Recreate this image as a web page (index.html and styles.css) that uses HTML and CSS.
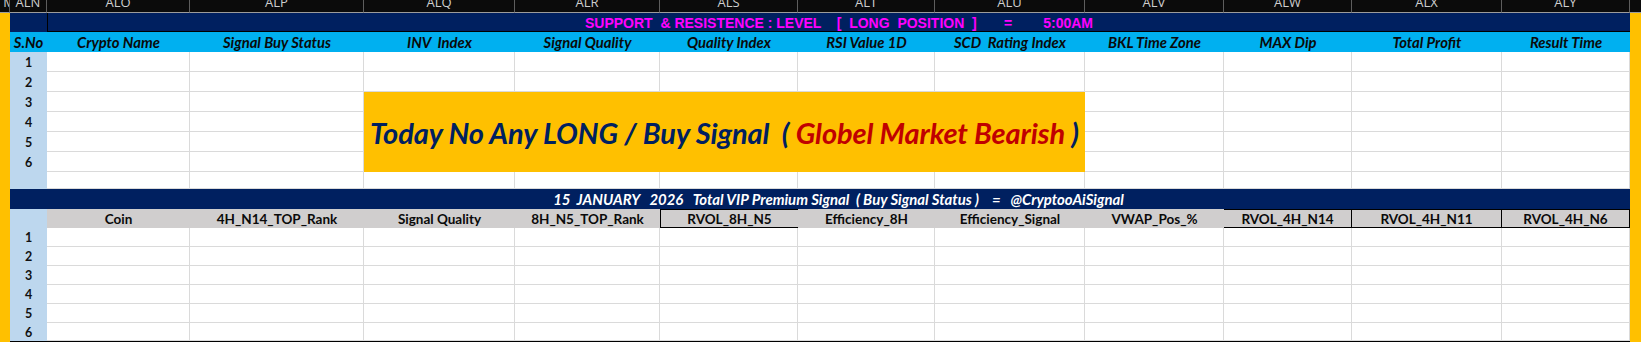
FILE: index.html
```html
<!DOCTYPE html>
<html>
<head>
<meta charset="utf-8">
<link rel="stylesheet" href="styles.css">
</head>
<body>
<div class="sheet">
  <!-- column header row -->
  <div class="h hm">M</div>
  <div class="h">ALN</div>
  <div class="h">ALO</div>
  <div class="h">ALP</div>
  <div class="h">ALQ</div>
  <div class="h">ALR</div>
  <div class="h">ALS</div>
  <div class="h">ALT</div>
  <div class="h">ALU</div>
  <div class="h">ALV</div>
  <div class="h">ALW</div>
  <div class="h">ALX</div>
  <div class="h">ALY</div>
  <div class="h hlast"></div>

  <div class="side side-l"></div>
  <div class="side side-r"></div>

  <!-- title row -->
  <div class="navy"></div>
  <div class="title">SUPPORT  &amp; RESISTENCE : LEVEL    [  LONG  POSITION  ]       =        5:00AM</div>

  <!-- cyan header -->
  <div class="hc">S.No</div>
  <div class="hc">Crypto Name</div>
  <div class="hc">Signal Buy Status</div>
  <div class="hc">INV  Index</div>
  <div class="hc">Signal Quality</div>
  <div class="hc">Quality Index</div>
  <div class="hc">RSI Value 1D</div>
  <div class="hc">SCD  Rating Index</div>
  <div class="hc">BKL Time Zone</div>
  <div class="hc">MAX Dip</div>
  <div class="hc">Total Profit</div>
  <div class="hc">Result Time</div>

  <!-- yellow notice -->
  <div class="notice">Today No Any LONG / Buy Signal&nbsp;&nbsp;( <span class="red">Globel Market Bearish</span> )</div>

  <!-- top rows -->
  <div class="n">1</div>
  <div class="c"></div><div class="c"></div><div class="c"></div><div class="c"></div><div class="c"></div><div class="c"></div><div class="c"></div><div class="c"></div><div class="c"></div><div class="c"></div><div class="c"></div>
  <div class="n">2</div>
  <div class="c"></div><div class="c"></div><div class="c"></div><div class="c"></div><div class="c"></div><div class="c"></div><div class="c"></div><div class="c"></div><div class="c"></div><div class="c"></div><div class="c"></div>
  <div class="n">3</div>
  <div class="c"></div><div class="c"></div><div class="c"></div><div class="c"></div><div class="c"></div><div class="c"></div>
  <div class="n">4</div>
  <div class="c"></div><div class="c"></div><div class="c"></div><div class="c"></div><div class="c"></div><div class="c"></div>
  <div class="n">5</div>
  <div class="c"></div><div class="c"></div><div class="c"></div><div class="c"></div><div class="c"></div><div class="c"></div>
  <div class="n">6</div>
  <div class="c"></div><div class="c"></div><div class="c"></div><div class="c"></div><div class="c"></div><div class="c"></div>
  <div class="n"></div>
  <div class="c"></div><div class="c"></div><div class="c"></div><div class="c"></div><div class="c"></div><div class="c"></div><div class="c"></div><div class="c"></div><div class="c"></div><div class="c"></div><div class="c"></div>

  <!-- second title -->
  <div class="navy"></div>
  <div class="title2">15  JANUARY   2026   Total VIP Premium Signal  ( Buy Signal Status )    =   @CryptooAiSignal</div>

  <!-- grey header -->
  <div class="n"></div>
  <div class="g">Coin</div>
  <div class="g">4H_N14_TOP_Rank</div>
  <div class="g">Signal Quality</div>
  <div class="g">8H_N5_TOP_Rank</div>
  <div class="g box box-open">RVOL_8H_N5</div>
  <div class="g">Efficiency_8H</div>
  <div class="g">Efficiency_Signal</div>
  <div class="g">VWAP_Pos_%</div>
  <div class="g box">RVOL_4H_N14</div>
  <div class="g box">RVOL_4H_N11</div>
  <div class="g box">RVOL_4H_N6</div>

  <!-- bottom rows -->
  <div class="n">1</div>
  <div class="c"></div><div class="c"></div><div class="c"></div><div class="c"></div><div class="c"></div><div class="c"></div><div class="c"></div><div class="c"></div><div class="c"></div><div class="c"></div><div class="c"></div>
  <div class="n">2</div>
  <div class="c"></div><div class="c"></div><div class="c"></div><div class="c"></div><div class="c"></div><div class="c"></div><div class="c"></div><div class="c"></div><div class="c"></div><div class="c"></div><div class="c"></div>
  <div class="n">3</div>
  <div class="c"></div><div class="c"></div><div class="c"></div><div class="c"></div><div class="c"></div><div class="c"></div><div class="c"></div><div class="c"></div><div class="c"></div><div class="c"></div><div class="c"></div>
  <div class="n">4</div>
  <div class="c"></div><div class="c"></div><div class="c"></div><div class="c"></div><div class="c"></div><div class="c"></div><div class="c"></div><div class="c"></div><div class="c"></div><div class="c"></div><div class="c"></div>
  <div class="n">5</div>
  <div class="c"></div><div class="c"></div><div class="c"></div><div class="c"></div><div class="c"></div><div class="c"></div><div class="c"></div><div class="c"></div><div class="c"></div><div class="c"></div><div class="c"></div>
  <div class="n">6</div>
  <div class="c"></div><div class="c"></div><div class="c"></div><div class="c"></div><div class="c"></div><div class="c"></div><div class="c"></div><div class="c"></div><div class="c"></div><div class="c"></div><div class="c"></div>

  <div class="endline"></div>
</div>
</body>
</html>
```

FILE: styles.css
```css
* { box-sizing: border-box; margin: 0; padding: 0; }
html, body { width: 1641px; height: 342px; overflow: hidden; background: #ffffff; }
body { font-family: Lato, "Liberation Sans", sans-serif; color: #000; }

.sheet {
  display: grid;
  grid-template-columns: 10px 37px 143px 174px 151px 145px 138px 137px 150px 139px 128px 150px 128px 11px;
  grid-template-rows: 13px 19px 20px repeat(6, 20px) 17px 20px 19px repeat(5, 19px) 18px 1px;
  width: 1641px;
  height: 342px;
}

/* column letters */
.h {
  background: #0b0b0b;
  border-right: 1px solid #5e5e5e;
  border-bottom: 1px solid #9c9c9c;
  color: #cfcfcf;
  font-family: "Open Sans", "Liberation Sans", sans-serif;
  font-size: 13px;
  line-height: 5px;
  text-align: center;
  overflow: hidden;
  white-space: nowrap;
}
.hm { text-align: right; direction: rtl; text-indent: -6px; }
.hlast { border-right: none; }

.side { background: #ffc000; grid-row: 2 / -1; }
.side-l { grid-column: 1; }
.side-r { grid-column: 14; }

.navy { background: #002060; grid-column: 2; }

.title {
  grid-column: 3 / 14;
  background: #002060;
  border-left: 1px solid #000;
  border-bottom: 1px solid #000;
  color: #ff00ff;
  font-family: "Liberation Sans", Arial, sans-serif;
  font-weight: bold;
  font-size: 14px;
  white-space: pre;
  display: flex;
  align-items: center;
  justify-content: center;
  padding-top: 1px;
}

.hc {
  background: #00b0f0;
  font-weight: bold;
  font-style: italic;
  font-size: 14.8px;
  white-space: pre;
  display: flex;
  align-items: center;
  justify-content: center;
  color: #0a0a0a;
}

.n {
  grid-column: 2;
  background: #bdd7ee;
  font-weight: bold;
  font-size: 12.5px;
  display: flex;
  align-items: center;
  justify-content: center;
  color: #111;
}

.c {
  background: #fff;
  border-right: 1px solid #dadada;
  border-bottom: 1px solid #dadada;
}

.notice {
  grid-column: 5 / 10;
  grid-row: 6 / 10;
  background: #ffc000;
  color: #002060;
  font-weight: bold;
  font-style: italic;
  font-size: 29px;
  letter-spacing: -0.1px;
  white-space: pre;
  display: flex;
  align-items: center;
  justify-content: center;
}
.red { color: #c00000; }

.title2 {
  grid-column: 3 / 14;
  background: #002060;
  color: #ffffff;
  font-weight: bold;
  font-style: italic;
  font-size: 14.9px;
  white-space: pre;
  display: flex;
  align-items: center;
  justify-content: center;
}

.g {
  background: #d0cece;
  font-weight: bold;
  font-size: 13.5px;
  white-space: nowrap;
  display: flex;
  align-items: center;
  justify-content: center;
  color: #0a0a0a;
}
.box {
  border-top: 1px solid #000;
  border-bottom: 1px solid #000;
  border-right: 1px solid #000;
}
.box-open { border-left: 1px solid #000; border-right: none; }

.endline { grid-column: 2 / 14; background: #000; }
```
